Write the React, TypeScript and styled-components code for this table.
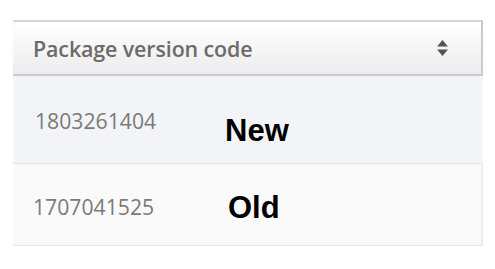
import styled, { createGlobalStyle } from 'styled-components';

const GlobalStyle = createGlobalStyle`
  html, body {
    margin: 0;
    padding: 0;
    background: #ffffff;
  }
`;

const Page = styled.div`
  padding: 20px 12px 0 13px;
  width: 470px;
`;

const Table = styled.div`
  display: flex;
  flex-direction: column;
`;

const HeaderRow = styled.div`
  display: flex;
  align-items: center;
  justify-content: space-between;
  box-sizing: border-box;
  height: 56px;
  padding: 0 33px 0 20px;
  background: linear-gradient(#ffffff, #ececec);
  border-top: 2px solid #d4d6da;
  border-bottom: 2px solid #c9cbd0;
  border-right: 2px solid #c9cbd0;
`;

const HeaderLabel = styled.span`
  font-family: 'Open Sans', 'DejaVu Sans', sans-serif;
  font-weight: 600;
  font-size: 21.4px;
  color: #6b6b6b;
  letter-spacing: -0.1px;
`;

const Row = styled.div<{ $bg: string; $height: number; $indent: number; $edge: string; $top: number }>`
  display: flex;
  align-items: center;
  box-sizing: border-box;
  height: ${(p) => p.$height}px;
  padding-left: ${(p) => p.$indent}px;
  padding-top: ${(p) => p.$top}px;
  background: ${(p) => p.$bg};
  border-right: 2px solid ${(p) => p.$edge};
  border-bottom: 1px solid #e3e5ea;
`;

const Code = styled.span`
  font-family: 'Open Sans', 'DejaVu Sans', sans-serif;
  font-size: 21.2px;
  color: #7a7a7a;
  width: 190px;
`;

const Tag = styled.span<{ $shift: number; $offset: number }>`
  font-family: 'Liberation Sans', Arial, sans-serif;
  font-weight: 700;
  font-size: 31px;
  color: #000000;
  margin-top: ${(p) => p.$shift}px;
  margin-left: ${(p) => p.$offset}px;
`;

const SortIcon = () => (
  <svg width="11" height="16" viewBox="0 0 11 16">
    <path d="M5.5 0 L11 6.5 H0 Z" fill="#545454" />
    <path d="M0 9.5 H11 L5.5 16 Z" fill="#545454" />
  </svg>
);

const rows = [
  { code: '1803261404', tag: 'New', bg: '#f2f4f8', height: 88, indent: 22, edge: '#f2f4f8', top: 1, shift: 21, offset: 0 },
  { code: '1707041525', tag: 'Old', bg: '#fafafb', height: 82, indent: 20, edge: '#ececee', top: 4, shift: 2, offset: 5 },
];

export default function App() {
  return (
    <>
      <GlobalStyle />
      <Page>
        <Table>
          <HeaderRow>
            <HeaderLabel>Package version code</HeaderLabel>
            <SortIcon />
          </HeaderRow>
          {rows.map((r) => (
            <Row key={r.code} $bg={r.bg} $height={r.height} $indent={r.indent} $edge={r.edge} $top={r.top}>
              <Code>{r.code}</Code>
              <Tag $shift={r.shift} $offset={r.offset}>{r.tag}</Tag>
            </Row>
          ))}
        </Table>
      </Page>
    </>
  );
}
